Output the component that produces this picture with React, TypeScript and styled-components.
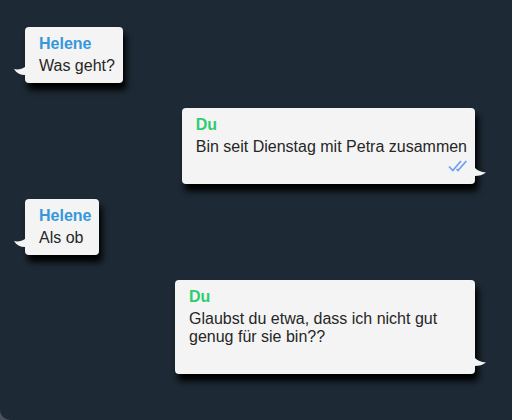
import React from "react";
import styled, { createGlobalStyle, css } from "styled-components";

const GlobalStyle = createGlobalStyle`
  body {
    margin: 0;
    background: #4b545e;
    font-family: "Liberation Sans", Arial, sans-serif;
  }
`;

const Chat = styled.main`
  box-sizing: border-box;
  display: flex;
  flex-direction: column;
  min-height: 100vh;
  padding: 27px 37px 24px 25px;
  background: #1d2934;
  border-bottom-left-radius: 10px;
`;

const Bubble = styled.article<{ $own: boolean }>`
  position: relative;
  box-sizing: border-box;
  max-width: 300px;
  padding: 8px 8px 8px 14px;
  border-radius: 4px;
  background: #f4f4f4;
  box-shadow: 3px 7px 6px #000;
  color: #262626;
  font-size: 16px;
  line-height: 18px;
  ${({ $own }) =>
    $own
      ? css`
          align-self: flex-end;
          margin: 25px 0 15px;
        `
      : css`
          align-self: flex-start;
        `}
`;

const Author = styled.h2<{ $own: boolean }>`
  margin: 0 0 4px;
  font-size: 16px;
  line-height: 18px;
  font-weight: 700;
  color: ${({ $own }) => ($own ? "#2ecc71" : "#3498db")};
`;

const Text = styled.p`
  margin: 0;
`;

const Status = styled.div`
  display: flex;
  justify-content: flex-end;
  align-items: center;
  height: 20px;
`;

const Tail = styled.svg<{ $own: boolean }>`
  position: absolute;
  bottom: 8px;
  ${({ $own }) => ($own ? "left: 100%;" : "right: 100%;")}
  fill: #f4f4f4;
`;

type Message = { text: string; own: boolean; read?: boolean };

const messages: Message[] = [
  { text: "Was geht?", own: false },
  { text: "Bin seit Dienstag mit Petra zusammen", own: true, read: true },
  { text: "Als ob", own: false },
  { text: "Glaubst du etwa, dass ich nicht gut genug für sie bin??", own: true },
];

const ReadTicks = () => (
  <svg width="19" height="12" viewBox="0 0 19 12" fill="none" stroke="#6d9df5" strokeWidth="1.7" role="img" aria-label="Gelesen">
    <path d="M1 6.5 4.8 10.5 13 1M8.5 9 10 10.5 18.3 1" />
  </svg>
);

export default function App() {
  return (
    <>
      <GlobalStyle />
      <Chat>
        {messages.map(({ text, own, read }) => (
          <Bubble key={text} $own={own}>
            <Author $own={own}>{own ? "Du" : "Helene"}</Author>
            <Text>{text}</Text>
            {own && <Status>{read && <ReadTicks />}</Status>}
            <Tail $own={own} width="11" height="9" viewBox="0 0 11 9" aria-hidden="true">
              {own ? (
                <path d="M0 1C2.5 3.5 6 5 11 5.5C8 8 4 9 0 9Z" />
              ) : (
                <path d="M0 3C4 4 8 3 11 1V9C6 9 2.5 7 0 3Z" />
              )}
            </Tail>
          </Bubble>
        ))}
      </Chat>
    </>
  );
}
